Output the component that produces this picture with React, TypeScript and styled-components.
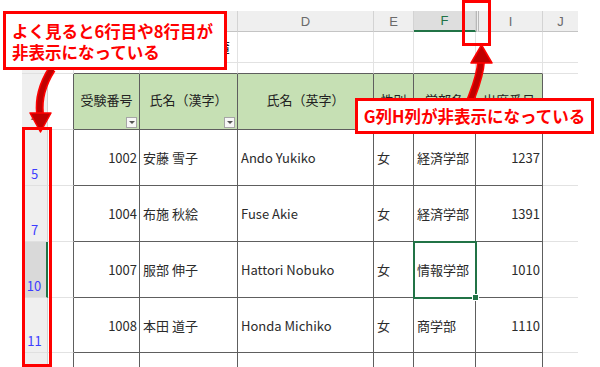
import React from 'react';
import styled, { createGlobalStyle, css } from 'styled-components';

const Global = createGlobalStyle`
  html, body { margin: 0; padding: 0; background: #ffffff; }
  body { font-family: "Noto Sans CJK JP", "Noto Sans", sans-serif; }
`;

const DARK = '#5e5e5e';
const GRID = '#e2e2e2';
const EXCEL_GREEN = '#217346';

const Stage = styled.div`
  position: relative;
  width: 600px;
  height: 367px;
  overflow: hidden;
  background: #ffffff;
`;

const Sheet = styled.div`
  display: grid;
  grid-template-columns: 26px 26px 66px 98px 136px 40px 62px 67px 35px;
  grid-template-rows: 21px 31px 11px 56px 56px 56px 56px 55px 30px;
  width: 556px;
  margin: 11px 0 0 22px;
  font-size: 13px;
  color: #262626;
`;

const ColHead = styled.div<{ $active?: boolean; $hiddenBefore?: boolean; $last?: boolean }>`
  box-sizing: border-box;
  display: flex;
  align-items: center;
  justify-content: center;
  background: #efefef;
  color: #6a6a6a;
  font-family: "Liberation Sans", "Noto Sans", sans-serif;
  font-size: 13px;
  border-right: 1px solid #d3d3d3;
  border-bottom: 1px solid #c4c4c4;
  ${(p) => p.$active && css`
    background: #dedede;
    color: ${EXCEL_GREEN};
    border-bottom: 2px solid ${EXCEL_GREEN};
  `}
  ${(p) => p.$hiddenBefore && css`
    border-left: 3px double #b8b8b8;
  `}
  ${(p) => p.$last && css`
    border-right: none;
  `}
`;

const RowHead = styled.div<{ $active?: boolean; $filtered?: boolean }>`
  box-sizing: border-box;
  display: flex;
  align-items: flex-end;
  justify-content: center;
  padding-bottom: 2px;
  overflow: hidden;
  background: #efefef;
  color: ${(p) => (p.$filtered ? '#3d3dff' : '#6a6a6a')};
  font-size: 13px;
  border-right: 1px solid #d3d3d3;
  border-bottom: 1px solid #e0e0e0;
  ${(p) => p.$active && css`
    background: #d9d9d9;
    border-right: 2px solid ${EXCEL_GREEN};
  `}
`;

const GridCell = styled.div<{ $darkRight?: boolean; $darkBottom?: boolean; $noRight?: boolean }>`
  box-sizing: border-box;
  background: #ffffff;
  border-right: 1px solid ${(p) => (p.$darkRight ? DARK : GRID)};
  border-bottom: 1px solid ${(p) => (p.$darkBottom ? DARK : GRID)};
  ${(p) => p.$noRight && css`border-right: none;`}
`;

const TitleCell = styled.div`
  box-sizing: border-box;
  grid-column: span 2;
  display: flex;
  align-items: center;
  padding-left: 3px;
  font-size: 17px;
  white-space: nowrap;
  overflow: hidden;
  color: #222;
  border-right: 1px solid ${GRID};
  border-bottom: 1px solid ${GRID};
`;

const HeadCell = styled.div`
  box-sizing: border-box;
  position: relative;
  display: flex;
  align-items: center;
  justify-content: center;
  padding-bottom: 4px;
  background: #c6e0b4;
  color: #222;
  font-size: 13px;
  white-space: nowrap;
  border-right: 1px solid ${DARK};
  border-bottom: 1px solid ${DARK};
`;

const FilterBtn = styled.span`
  position: absolute;
  right: 2px;
  bottom: 1px;
  width: 11px;
  height: 11px;
  box-sizing: border-box;
  background: #f7f7f7;
  border: 1px solid #a6a6a6;
  display: flex;
  align-items: center;
  justify-content: center;
  &::after {
    content: '';
    width: 0;
    height: 0;
    border-left: 3px solid transparent;
    border-right: 3px solid transparent;
    border-top: 3px solid #555;
  }
`;

const DataCell = styled.div<{ $right?: boolean; $selected?: boolean }>`
  box-sizing: border-box;
  position: relative;
  display: flex;
  align-items: center;
  justify-content: ${(p) => (p.$right ? 'flex-end' : 'flex-start')};
  padding: 0 ${(p) => (p.$right ? '2px' : '3px')};
  white-space: nowrap;
  background: #ffffff;
  color: #2b2b2b;
  font-size: 13px;
  border-right: 1px solid ${DARK};
  border-bottom: 1px solid ${DARK};
  ${(p) => p.$selected && css`
    z-index: 1;
    &::after {
      content: '';
      position: absolute;
      left: -1px;
      top: -1px;
      right: -2px;
      bottom: -2px;
      border: 2px solid ${EXCEL_GREEN};
    }
    &::before {
      content: '';
      position: absolute;
      right: -4px;
      bottom: -4px;
      width: 5px;
      height: 5px;
      background: ${EXCEL_GREEN};
      border: 1px solid #ffffff;
      z-index: 2;
    }
  `}
`;

const Callout = styled.div<{ $size: number }>`
  position: absolute;
  box-sizing: border-box;
  background: #ffffff;
  border: 3px solid #ff0000;
  color: #ff0000;
  font-weight: 700;
  font-size: ${(p) => p.$size}px;
  white-space: nowrap;
  z-index: 5;
`;

const CalloutLeft = styled(Callout)`
  left: 3px;
  top: 11px;
  width: 224px;
  height: 59px;
  padding: 7px 0 0 6px;
  line-height: 21px;
`;

const CalloutRight = styled(Callout)`
  left: 355px;
  top: 98px;
  width: 239px;
  height: 36px;
  display: flex;
  align-items: center;
  justify-content: center;
`;

const Frame = styled.div`
  position: absolute;
  box-sizing: border-box;
  border: 3px solid #ff0000;
  z-index: 4;
`;

const RowFrame = styled(Frame)`
  left: 22px;
  top: 127px;
  width: 30px;
  height: 240px;
`;

const ColFrame = styled(Frame)`
  left: 462px;
  top: 0px;
  width: 29px;
  height: 46px;
`;

const ArrowLayer = styled.svg`
  position: absolute;
  left: 0;
  top: 0;
  width: 600px;
  height: 367px;
  z-index: 4;
  pointer-events: none;
`;

const letters = ['A', 'B', 'C', 'D', 'E', 'F', 'I', 'J'];
const headers = ['受験番号', '氏名（漢字）', '氏名（英字）', '性別', '学部名', '出席番号'];

type Row = { n: number; id: string; kanji: string; roman: string; sex: string; dept: string; score: string };
const rows: Row[] = [
  { n: 5, id: '1002', kanji: '安藤 雪子', roman: 'Ando Yukiko', sex: '女', dept: '経済学部', score: '1237' },
  { n: 7, id: '1004', kanji: '布施 秋絵', roman: 'Fuse Akie', sex: '女', dept: '経済学部', score: '1391' },
  { n: 10, id: '1007', kanji: '服部 伸子', roman: 'Hattori Nobuko', sex: '女', dept: '情報学部', score: '1010' },
  { n: 11, id: '1008', kanji: '本田 道子', roman: 'Honda Michiko', sex: '女', dept: '商学部', score: '1110' },
];

export default function App() {
  return (
    <Stage>
      <Global />
      <Sheet>
        {/* column header band */}
        <ColHead />
        {letters.map((l) => (
          <ColHead key={l} $active={l === 'F'} $hiddenBefore={l === 'I'} $last={l === 'J'}>
            {l}
          </ColHead>
        ))}

        {/* row 1: title */}
        <RowHead>1</RowHead>
        <GridCell />
        <TitleCell>入学試験受験者名簿</TitleCell>
        <GridCell />
        <GridCell />
        <GridCell />
        <GridCell />
        <GridCell $noRight />

        {/* thin row above the table */}
        <RowHead />
        <GridCell />
        {[0, 1, 2, 3, 4, 5].map((i) => (
          <GridCell key={i} $darkBottom />
        ))}
        <GridCell $noRight />

        {/* row 4: table header */}
        <RowHead>4</RowHead>
        <GridCell $darkRight />
        {headers.map((h) => (
          <HeadCell key={h}>
            {h}
            <FilterBtn />
          </HeadCell>
        ))}
        <GridCell $noRight />

        {/* data rows */}
        {rows.map((r) => (
          <React.Fragment key={r.n}>
            <RowHead $filtered $active={r.n === 10}>{r.n}</RowHead>
            <GridCell $darkRight />
            <DataCell $right>{r.id}</DataCell>
            <DataCell>{r.kanji}</DataCell>
            <DataCell>{r.roman}</DataCell>
            <DataCell>{r.sex}</DataCell>
            <DataCell $selected={r.n === 10}>{r.dept}</DataCell>
            <DataCell $right>{r.score}</DataCell>
            <GridCell $noRight />
          </React.Fragment>
        ))}

        {/* next row: only its top edge is in view */}
        <RowHead $filtered />
        <GridCell $darkRight />
        {[0, 1, 2, 3, 4, 5].map((i) => (
          <DataCell key={i} />
        ))}
        <GridCell $noRight />
      </Sheet>

      <ArrowLayer viewBox="0 0 600 367">
        <path d="M52,69 C45,80 38,96 40,114" fill="none" stroke="#ff0000" strokeWidth={8} />
        <path d="M52,69 C45,80 38,96 40,114" fill="none" stroke="#c00000" strokeWidth={5} />
        <polygon points="30,113 51,113 40.5,132" fill="#c00000" stroke="#ff0000" strokeWidth={1.5} strokeLinejoin="round" />

        <path d="M469,104 C474,90 480,78 481,62" fill="none" stroke="#ff0000" strokeWidth={8} />
        <path d="M469,104 C474,90 480,78 481,62" fill="none" stroke="#c00000" strokeWidth={5} />
        <polygon points="471,63 492,63 481.5,45" fill="#c00000" stroke="#ff0000" strokeWidth={1.5} strokeLinejoin="round" />
      </ArrowLayer>

      <RowFrame />
      <ColFrame />

      <CalloutLeft $size={16.5}>
        よく見ると6行目や8行目が
        <br />
        非表示になっている
      </CalloutLeft>
      <CalloutRight $size={16.5}>G列H列が非表示になっている</CalloutRight>
    </Stage>
  );
}
